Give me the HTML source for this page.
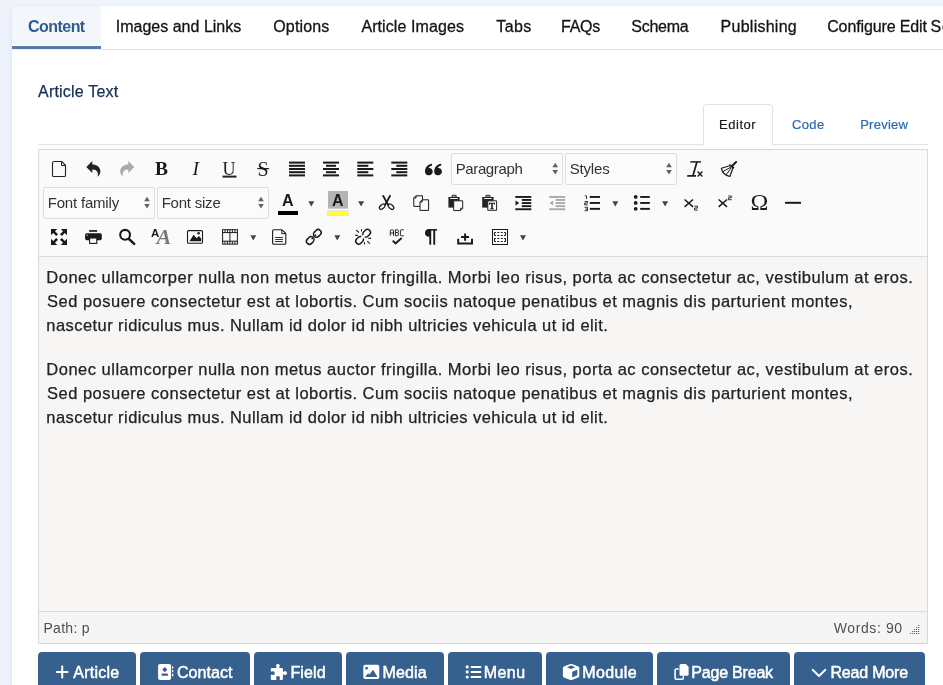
<!DOCTYPE html>
<html><head><meta charset="utf-8"><title>Article Edit</title>
<style>
html,body{margin:0;padding:0;}
body{width:943px;height:685px;overflow:hidden;position:relative;background:#eff3fc;font-family:"Liberation Sans",sans-serif;}
.abs{position:absolute;}
.t{position:absolute;white-space:pre;font-family:"Liberation Sans",sans-serif;}
#card{left:12px;top:6px;width:940px;height:690px;background:#fff;border-top-left-radius:4px;box-shadow:-1px 2px 5px rgba(175,195,230,0.28);}
#tabactive{left:12px;top:6px;width:89px;height:39px;background:#f3f6fa;border-top-left-radius:4px;}
#tabul{left:12px;top:46px;width:89px;height:3px;background:#587ca5;}
#tabline{left:101px;top:49px;width:842px;height:1px;background:#dde5f0;}
#tabline2{left:12px;top:49px;width:89px;height:1px;background:#e8edf5;}
#navline{left:38px;top:144px;width:890px;height:1px;background:#dfe3ed;}
#edtab{left:703px;top:104px;width:68px;height:40px;border:1px solid #dfe3ed;border-bottom:1px solid #fff;border-radius:4px 4px 0 0;background:#fff;}
#editor{left:38px;top:149px;width:888px;height:493px;border:1px solid #d8d8d8;background:#f7f6f5;}
#toolbar{left:39px;top:150px;width:888px;height:106px;background:#fafafa;border-bottom:1px solid #dcdcdc;}
#status{left:39px;top:611px;width:888px;height:32px;background:#f5f5f5;border-top:1px solid #d9d9d9;box-sizing:border-box;}
.sel{position:absolute;height:32px;box-sizing:border-box;border:1px solid #dedede;background:#fbfbfb;border-radius:2px;}
.txt{left:0;top:0;width:943px;height:685px;will-change:transform;}
.btn{position:absolute;top:652px;height:40px;background:#36608e;border-radius:4px;}
</style></head><body>
<div class="abs" id="card"></div>
<div class="abs" id="tabactive"></div>
<div class="abs" id="tabul"></div>
<div class="abs" id="tabline"></div>
<div class="abs" id="tabline2"></div>
<div class="abs" id="navline"></div>
<div class="abs" id="edtab"></div>
<div class="abs" id="editor"></div>
<div class="abs" id="toolbar"></div>
<div class="abs" id="status"></div>
<div class="sel" style="left:451px;top:153px;width:112px"></div>
<div class="sel" style="left:565px;top:153px;width:112px"></div>
<div class="sel" style="left:43px;top:187px;width:112px"></div>
<div class="sel" style="left:157px;top:187px;width:112px"></div>
<div class="btn" style="left:38px;width:98px"></div>
<div class="btn" style="left:140px;width:109.5px"></div>
<div class="btn" style="left:254px;width:88px"></div>
<div class="btn" style="left:346px;width:98px"></div>
<div class="btn" style="left:448px;width:94px"></div>
<div class="btn" style="left:546px;width:107px"></div>
<div class="btn" style="left:657px;width:133px"></div>
<div class="btn" style="left:794px;width:131px"></div>
<svg class="abs" style="left:0;top:0" width="943" height="685" viewBox="0 0 943 685">
<!-- ROW 1 -->
<!-- new document -->
<path d="M53.5 161.5 h8.2 l3.8 3.8 v9.9 a1.3 1.3 0 0 1 -1.3 1.3 h-10.4 a1.3 1.3 0 0 1 -1.3 -1.3 v-12.4 a1.3 1.3 0 0 1 1.3 -1.3 z" fill="none" stroke="#222" stroke-width="1.1"/>
<path d="M61.5 161.8 v3.7 h3.8" fill="none" stroke="#222" stroke-width="1"/>
<!-- undo -->
<path d="M86.3 167 L92.3 161.1 L92.3 164.5 C96.5 164.5 100.4 167.2 100.4 171.2 C100.4 173.6 99 175.6 97.6 176.7 C98.2 174.6 98.6 169.6 92.3 169.6 L92.3 172.9 Z" fill="#222"/>
<!-- redo (disabled) -->
<path d="M134.3 167 L128.3 161.1 L128.3 164.5 C124.1 164.5 120.2 167.2 120.2 171.2 C120.2 173.6 121.6 175.6 123 176.7 C122.4 174.6 122 169.6 128.3 169.6 L128.3 172.9 Z" fill="#aaa"/>
<!-- underline bar -->
<rect x="222.5" y="175.6" width="14" height="2" fill="#222"/>
<!-- strike line -->
<rect x="257.3" y="168" width="11.8" height="1.2" fill="#222"/>
<!-- justify -->
<g fill="#1a1a1a">
<rect x="289" y="161.6" width="16" height="2"/><rect x="289" y="164.8" width="16" height="2"/><rect x="289" y="168" width="16" height="2"/><rect x="289" y="171.2" width="16" height="2"/><rect x="289" y="174.4" width="16" height="2"/>
<!-- center -->
<rect x="323" y="161.6" width="16" height="2"/><rect x="326" y="164.8" width="10" height="2"/><rect x="323" y="168" width="16" height="2"/><rect x="326" y="171.2" width="10" height="2"/><rect x="323" y="174.4" width="16" height="2"/>
<!-- left -->
<rect x="357.3" y="161.6" width="16" height="2"/><rect x="357.3" y="164.8" width="11" height="2"/><rect x="357.3" y="168" width="16" height="2"/><rect x="357.3" y="171.2" width="11" height="2"/><rect x="357.3" y="174.4" width="16" height="2"/>
<!-- right -->
<rect x="391.3" y="161.6" width="16" height="2"/><rect x="396.3" y="164.8" width="11" height="2"/><rect x="391.3" y="168" width="16" height="2"/><rect x="396.3" y="171.2" width="11" height="2"/><rect x="391.3" y="174.4" width="16" height="2"/>
</g>
<!-- blockquote -->
<g fill="#1a1a1a">
<path d="M428.6 175.2 a3.6 3.6 0 0 1 -3.6 -3.6 c0 -4.4 3 -7.6 7 -7.9 v1.7 c-1.9 0.4 -3.2 1.7 -3.5 2.7 a3.6 3.6 0 1 1 0.1 7.1 z"/>
<path d="M437.8 175.2 a3.6 3.6 0 0 1 -3.6 -3.6 c0 -4.4 3 -7.6 7 -7.9 v1.7 c-1.9 0.4 -3.2 1.7 -3.5 2.7 a3.6 3.6 0 1 1 0.1 7.1 z"/>
</g>
<!-- select arrows -->
<g fill="#606060">
<path d="M552.4 167.2 l2.8 -4.4 l2.8 4.4 z M552.4 170 l2.8 4.6 l2.8 -4.6 z"/>
<path d="M666.2 167.2 l2.8 -4.4 l2.8 4.4 z M666.2 170 l2.8 4.6 l2.8 -4.6 z"/>
<path d="M144.2 201.2 l2.8 -4.4 l2.8 4.4 z M144.2 204 l2.8 4.6 l2.8 -4.6 z"/>
<path d="M258.2 201.2 l2.8 -4.4 l2.8 4.4 z M258.2 204 l2.8 4.6 l2.8 -4.6 z"/>
</g>
<!-- remove format Tx -->
<g stroke="#1a1a1a" fill="none">
<path d="M690.3 161.9 h10.6" stroke-width="1.5"/>
<path d="M696.9 162 L693 175.4" stroke-width="1.7"/>
<path d="M687.2 175.9 h8.8" stroke-width="1.7"/>
<path d="M697.6 171.6 l4.8 4.8 M702.4 171.6 l-4.8 4.8" stroke-width="1.4"/>
</g>
<!-- brush / clear -->
<g stroke="#1a1a1a" fill="none" stroke-linejoin="round" stroke-linecap="round">
<path d="M736.1 162 L732 166" stroke-width="1.9"/>
<path d="M730 165.1 L733.4 167.5" stroke-width="1.7"/>
<path d="M729.8 165.7 L721.4 168.3 Q722.6 174.6 729.9 176.5 L733 167.800" stroke-width="1.2"/>
<path d="M730.600 167.300 L723 171.500 M731.300 167.800 L726.300 174.500" stroke-width="1"/>
</g>
<!-- ROW 2 -->
<!-- text colour bar -->
<rect x="278" y="211" width="20" height="4" fill="#000"/>
<!-- bg colour -->
<rect x="328" y="191" width="20" height="17.6" fill="#b4b4b4"/>
<rect x="327.5" y="210.5" width="21" height="5" fill="#ffff33" stroke="#e4e4e4" stroke-width="1"/>
<!-- dropdown arrows row2 -->
<g fill="#444">
<path d="M308.3 201.2 h6 l-3 5.2 z"/>
<path d="M358.1 201.2 h6 l-3 5.2 z"/>
<path d="M612.3 201.2 h6 l-3 5.2 z"/>
<path d="M662.1 201.2 h6 l-3 5.2 z"/>
<!-- row3 -->
<path d="M250.3 235.2 h6 l-3 5.2 z"/>
<path d="M334.3 235.2 h6 l-3 5.2 z"/>
<path d="M520 235.2 h6 l-3 5.2 z"/>
</g>
<!-- cut (scissors) -->
<g stroke="#1a1a1a" fill="none">
<path d="M383.2 195.9 L387.8 204.4" stroke-width="1.9" stroke-linecap="round"/>
<path d="M390 195.9 L385.4 204.4" stroke-width="1.9" stroke-linecap="round"/>
<ellipse cx="382.2" cy="206.7" rx="3.3" ry="1.9" transform="rotate(-42 382.2 206.7)" stroke-width="1.3"/>
<ellipse cx="391" cy="206.7" rx="3.3" ry="1.9" transform="rotate(42 391 206.7)" stroke-width="1.3"/>
</g>
<!-- copy -->
<g stroke="#1a1a1a" fill="#fafafa" stroke-width="1">
<path d="M415.8 195.8 h6.7 v10.6 h-8.7 v-8.6 z"/>
<path d="M413.9 198 h2.1 v-2.1" fill="none"/>
<path d="M422.1 199.8 h6.5 v10.6 h-8.6 v-8.5 z"/>
<path d="M420.1 202 h2.1 v-2.1" fill="none"/>
</g>
<!-- paste -->
<g>
<path d="M448.4 197 h11.2 v10.6 h-11.2 z" fill="#222"/>
<path d="M452.2 195.3 h3.9 v1.8 h-3.9 z" fill="none" stroke="#222" stroke-width="1"/>
<rect x="450.2" y="198" width="7.600" height="1" fill="#f0f0f0"/>
<path d="M453.7 200.8 h9 v7.6 l-2.2 2.2 h-6.8 z" fill="#fafafa" stroke="#222" stroke-width="1"/>
<path d="M462.7 208.3 h-2.3 v2.3" fill="none" stroke="#222" stroke-width="0.9"/>
</g>
<!-- paste text -->
<g>
<path d="M482.2 197 h11.4 v10.6 h-11.4 z" fill="#222"/>
<path d="M486 195.3 h3.9 v1.8 h-3.9 z" fill="none" stroke="#222" stroke-width="1"/>
<rect x="484.1" y="198" width="7.600" height="1" fill="#f0f0f0"/>
<path d="M487.8 200.8 h8.800 v9.500 h-8.800 z" fill="#fafafa" stroke="#222" stroke-width="1"/>
</g>
<!-- indent -->
<g fill="#1a1a1a">
<rect x="515.3" y="196" width="16" height="1.9"/>
<rect x="521.8" y="199" width="9.5" height="1.9"/>
<rect x="521.8" y="202.1" width="9.5" height="1.9"/>
<rect x="521.8" y="205.2" width="9.5" height="1.9"/>
<rect x="515.3" y="208.3" width="16" height="1.9"/>
<path d="M515.5 200.5 l3.8 2.5 l-3.8 2.5 z"/>
</g>
<!-- outdent disabled -->
<g fill="#aaa">
<rect x="549.2" y="196" width="16" height="1.9"/>
<rect x="555.6" y="199" width="9.6" height="1.9"/>
<rect x="555.6" y="202.1" width="9.6" height="1.9"/>
<rect x="555.6" y="205.2" width="9.6" height="1.9"/>
<rect x="549.2" y="208.3" width="16" height="1.9"/>
<path d="M553.2 200.5 l-3.6 2.5 l3.6 2.5 z"/>
</g>
<!-- numlist -->
<g fill="#1a1a1a">
<rect x="589.8" y="196" width="10.2" height="1.9"/>
<rect x="589.8" y="202" width="10.2" height="1.9"/>
<rect x="589.8" y="207.9" width="10.2" height="1.9"/>
</g>
<g stroke="#1a1a1a" fill="none" stroke-width="0.9">
<path d="M584.8 195.9 h1.7 v3.2"/>
<path d="M584.6 201.5 h2.9 v1.6 h-2.9 v1.7 h3.1"/>
<path d="M584.6 207.3 h2.9 v3.4 h-3 M585.4 209 h2.1"/>
</g>
<!-- bullist -->
<g fill="#1a1a1a">
<circle cx="635.7" cy="196.9" r="1.9"/><circle cx="635.7" cy="202.9" r="1.9"/><circle cx="635.7" cy="208.8" r="1.9"/>
<rect x="640.2" y="196" width="9.6" height="1.9"/>
<rect x="640.2" y="202" width="9.6" height="1.9"/>
<rect x="640.2" y="207.9" width="9.6" height="1.9"/>
</g>
<!-- subscript -->
<g stroke="#1a1a1a" fill="none">
<path d="M684.6 199.5 l8.4 7.4 M693 199.5 l-8.4 7.4" stroke-width="1.5"/>
<path d="M694.4 206.2 h3 v1.9 h-2.9 v2 h3.3" stroke-width="0.9"/>
<!-- superscript -->
<path d="M718.6 199.5 l8.4 7.4 M727 199.5 l-8.4 7.4" stroke-width="1.5"/>
<path d="M728.3 196 h3 v1.8 h-2.9 v1.9 h3.3" stroke-width="0.9"/>
</g>
<!-- hr -->
<rect x="785" y="201.8" width="16" height="2" fill="#1a1a1a"/>
<!-- ROW 3 -->
<!-- fullscreen -->
<g fill="#1a1a1a">
<path d="M51 229 h6.2 l-2.2 2.2 l3 3 l-1.8 1.8 l-3 -3 l-2.2 2.2 z"/>
<path d="M67 229 v6.2 l-2.2 -2.2 l-3 3 l-1.8 -1.8 l3 -3 l-2.2 -2.2 z"/>
<path d="M51 245 v-6.2 l2.2 2.2 l3 -3 l1.8 1.8 l-3 3 l2.2 2.2 z"/>
<path d="M67 245 h-6.2 l2.2 -2.2 l-3 -3 l1.8 -1.8 l3 3 l2.2 -2.2 z"/>
</g>
<!-- print -->
<g>
<rect x="89.1" y="230.1" width="8" height="1.7" fill="#1a1a1a"/>
<rect x="85.1" y="233.2" width="16.7" height="7" rx="1.6" fill="#1a1a1a"/>
<rect x="89.6" y="238" width="7.2" height="5.4" fill="#fafafa" stroke="#1a1a1a" stroke-width="1.1"/>
<circle cx="87.2" cy="235.3" r="0.7" fill="#ccc"/>
</g>
<!-- search -->
<g stroke="#1a1a1a" fill="none">
<circle cx="125.100" cy="234.800" r="4.900" stroke-width="2.100"/>
<path d="M128.9 239 L134.2 243.9" stroke-width="2.5" stroke-linecap="round"/>
</g>
<!-- image -->
<g>
<rect x="187.5" y="230.6" width="15" height="12.6" rx="1" fill="#fafafa" stroke="#1a1a1a" stroke-width="1.1"/>
<path d="M189.5 241.3 L193.6 234.700 L196.600 238.300 L199 235.9 L201.2 238.600 V241.3 Z" fill="#1a1a1a"/>
<circle cx="198.6" cy="233.3" r="1.3" fill="#1a1a1a"/>
</g>
<!-- media -->
<g stroke="#1a1a1a" fill="none" stroke-width="1">
<rect x="222.6" y="229.7" width="14.8" height="14.4"/>
<path d="M222.6 232.6 h14.8 M222.6 241.2 h14.8 M229.9 232.6 v8.6" />
<path d="M225 229.7 v2.9 M227.5 229.7 v2.9 M229.9 229.7 v2.9 M232.4 229.7 v2.9 M234.9 229.7 v2.9 M225 241.2 v2.9 M227.5 241.2 v2.9 M229.9 241.2 v2.9 M232.4 241.2 v2.9 M234.9 241.2 v2.9" stroke-width="0.9"/>
</g>
<!-- template -->
<g stroke="#1a1a1a" fill="none">
<path d="M273.9 229.7 h8.1 l3.8 3.8 v9.5 a1.3 1.3 0 0 1 -1.3 1.3 h-10.6 a1.3 1.3 0 0 1 -1.3 -1.3 v-12 a1.3 1.3 0 0 1 1.3 -1.3 z" stroke-width="1.1"/>
<path d="M281.8 230 v3.7 h3.8" stroke-width="1"/>
<path d="M275.2 237.500 h7.700 M275.2 239.500 h7.700 M275.2 241.500 h7.700" stroke-width="0.900"/>
</g>
<!-- link -->
<g stroke="#1a1a1a" fill="none" stroke-width="1.450" stroke-linecap="round">
<path d="M3.92 -1.27 A3 3 0 0 0 1.2 -3 H-1.2 A3 3 0 0 0 -1.2 3 H1.2 A3 3 0 0 0 3.92 1.27" transform="translate(310.3 240.4) rotate(-45)"/>
<path d="M3.92 -1.27 A3 3 0 0 0 1.2 -3 H-1.2 A3 3 0 0 0 -1.2 3 H1.2 A3 3 0 0 0 3.92 1.27" transform="translate(317.3 233.4) rotate(135)"/>
<path d="M312 238.700 L315.700 235" stroke-width="1.300"/>
</g>
<!-- unlink -->
<g stroke="#1a1a1a" fill="none" stroke-width="1.450" stroke-linecap="round">
<path d="M3.6 -1.8 A3 3 0 0 0 1.2 -3 H-1.2 A3 3 0 0 0 -1.2 3 H1.2 A3 3 0 0 0 3.6 1.8" transform="translate(359.6 240.3) rotate(-45)"/>
<path d="M3.6 -1.8 A3 3 0 0 0 1.2 -3 H-1.2 A3 3 0 0 0 -1.2 3 H1.2 A3 3 0 0 0 3.6 1.8" transform="translate(366.6 233.3) rotate(135)"/>
<path d="M356.300 230.100 L358.900 232.500 M361.500 229.200 V231.500 M355.200 235.400 H357.800 M368.300 238.400 H371 M364.500 242.300 V244.600 M367.300 241.100 L369.900 243.600" stroke-width="1.100" stroke-linecap="butt"/>
</g>
<!-- spellcheck -->
<g stroke="#1a1a1a" fill="none">
<path d="M390.3 235.8 v-5 a1 1 0 0 1 1 -1 h1.2 a1 1 0 0 1 1 1 v5 M390.3 233 h3.2" stroke-width="0.95"/>
<path d="M395.4 229.8 v6 M395.4 229.8 h2 a1 1 0 0 1 1 1 v0.8 a1 1 0 0 1 -1 1 h-2 M397.4 232.6 a1 1 0 0 1 1 1 v1.2 a1 1 0 0 1 -1 1 h-2" stroke-width="0.95"/>
<path d="M403.8 229.8 h-2.4 a1 1 0 0 0 -1 1 v4 a1 1 0 0 0 1 1 h2.4" stroke-width="0.95"/>
<path d="M392.7 240.6 l2.9 2.8 l6 -5.4" stroke-width="2"/>
</g>
<!-- pilcrow -->
<g fill="#1a1a1a">
<path d="M430 229.100 h-0.800 a4.200 3.800 0 0 0 0 7.600 h0.800 z"/>
<rect x="428" y="229.100" width="9.100" height="1.500"/>
<rect x="429.300" y="229.100" width="1.900" height="15.600"/>
<rect x="433.300" y="229.100" width="1.900" height="15.600"/>
</g>
<!-- upload/insert -->
<g stroke="#1a1a1a" fill="none" stroke-width="2">
<path d="M458.2 238.8 v4.8 h13.8 v-4.8"/>
<path d="M465.1 233.4 v7.4 M461.1 237.1 h8"/>
</g>
<!-- table -->
<g stroke="#1a1a1a" fill="none">
<rect x="492.5" y="229.5" width="15" height="15" stroke-width="1"/>
<path d="M496 232.5 H494.5 V235.5 H496 M504 232.5 H505.5 V235.5 H504 M497.4 232.5 h1.9 M500.9 232.5 h1.9 M497.4 235.5 h1.9 M500.9 235.5 h1.9 M496 238.5 H494.5 V241.5 H496 M504 238.5 H505.5 V241.5 H504 M497.4 238.5 h1.9 M500.9 238.5 h1.9 M497.4 241.5 h1.9 M500.9 241.5 h1.9 " stroke-width="1"/>
</g>
<!-- status resize handle -->
<g fill="#666"><rect x="918" y="625" width="1.2" height="1" /><rect x="918" y="627" width="1.2" height="1" /><rect x="916" y="627" width="1.2" height="1" /><rect x="918" y="629" width="1.2" height="1" /><rect x="916" y="629" width="1.2" height="1" /><rect x="914" y="629" width="1.2" height="1" /><rect x="918" y="631" width="1.2" height="1" /><rect x="916" y="631" width="1.2" height="1" /><rect x="914" y="631" width="1.2" height="1" /><rect x="912" y="631" width="1.2" height="1" /><rect x="918" y="633" width="1.2" height="1" /><rect x="916" y="633" width="1.2" height="1" /><rect x="914" y="633" width="1.2" height="1" /><rect x="912" y="633" width="1.2" height="1" /><rect x="910" y="633" width="1.2" height="1" /></g>
<!-- BUTTON ICONS -->
<g fill="#fff">
<!-- plus -->
<rect x="55.9" y="671" width="12.6" height="2" rx="0.8"/>
<rect x="61.2" y="665.5" width="2" height="13" rx="0.8"/>
<!-- address book -->
<path d="M160.1 664 h9 a2 2 0 0 1 2 2 v12 a2 2 0 0 1 -2 2 h-9 a2 2 0 0 1 -2 -2 v-12 a2 2 0 0 1 2 -2 z M164.8 667.6 a2.1 2.1 0 1 0 0.01 0 z M162.9 673.4 a1.4 1.4 0 0 0 -1.4 1.4 v0.9 h6.6 v-0.9 a1.4 1.4 0 0 0 -1.4 -1.4 z" fill-rule="evenodd"/>
<rect x="172" y="666.3" width="1.3" height="2.4" rx="0.5"/>
<rect x="172" y="669.9" width="1.3" height="2.4" rx="0.5"/>
<rect x="172" y="673.8" width="1.3" height="2.4" rx="0.5"/>
<!-- puzzle -->
<path d="M270.8 669 a1 1 0 0 1 1 -1 h4.7 v-0.9 a1.9 1.9 0 1 1 2.8 0 v0.9 h2.6 a1 1 0 0 1 1 1 v2.7 h0.9 a1.9 1.9 0 1 1 0 2.8 h-0.9 v4.5 a1 1 0 0 1 -1 1 h-2.2 v-1.3 a1.9 1.9 0 1 0 -3.4 0 v1.3 h-4.5 a1 1 0 0 1 -1 -1 v-4.3 h1.2 a1.9 1.9 0 1 0 0 -3.3 h-1.2 z"/>
<!-- image -->
<path d="M365.3 664.7 h12 a2 2 0 0 1 2 2 v10.3 a2 2 0 0 1 -2 2 h-12 a2 2 0 0 1 -2 -2 v-10.3 a2 2 0 0 1 2 -2 z M366.6 666.8 a1.4 1.4 0 1 0 0.01 0 z M365.2 676.9 h11.8 v-1 l-3.9 -6.1 l-3.7 4.8 l-1.4 -1.4 z" fill-rule="evenodd"/>
<!-- list -->
<circle cx="467.2" cy="666.9" r="1.6"/><circle cx="467.2" cy="671.9" r="1.6"/><circle cx="467.2" cy="677" r="1.6"/>
<rect x="470.7" y="665.9" width="10.6" height="2" rx="0.6"/>
<rect x="470.7" y="670.9" width="10.6" height="2" rx="0.6"/>
<rect x="470.7" y="676" width="10.6" height="2" rx="0.6"/>
<!-- cube -->
<path d="M570.3 664.1 a2 2 0 0 1 1.6 0 l6.4 2.5 a1.6 1.6 0 0 1 1 1.5 v7.8 a1.6 1.6 0 0 1 -1 1.5 l-6.4 2.5 a2 2 0 0 1 -1.6 0 l-6.4 -2.5 a1.6 1.6 0 0 1 -1 -1.5 v-7.8 a1.6 1.6 0 0 1 1 -1.5 z M571.1 665.6 l-4.2 1.6 l4.2 1.7 l4.3 -1.7 z M572.2 671.7 v5.7 l5.1 -2.1 v-5.6 z" fill-rule="evenodd"/>
<!-- copy -->
<path d="M681 664 h4.8 l2.8 2.8 v7.5 a1.5 1.5 0 0 1 -1.5 1.5 h-6.1 a1.5 1.5 0 0 1 -1.5 -1.5 v-8.8 a1.5 1.5 0 0 1 1.5 -1.5 z"/>
</g>
<path d="M678.2 669 h-2 a1.1 1.1 0 0 0 -1.1 1.100 v8 a1.1 1.1 0 0 0 1.1 1.1 h6 a1.1 1.1 0 0 0 1.1 -1.1 v-1.200" fill="none" stroke="#fff" stroke-width="1.6" stroke-linecap="round"/>
<!-- chevron -->
<path d="M812.6 669.8 L819 676 L825.4 669.8" fill="none" stroke="#fff" stroke-width="1.9" stroke-linecap="round" stroke-linejoin="round"/>
</svg>
<div class="abs txt"><span class="t g" style="left:155px;top:157px;font-family:'Liberation Serif',serif;font-weight:700;font-size:19.5px;line-height:24px;color:#1a1a1a">B</span>
<span class="t g" style="left:192.4px;top:157px;font-family:'Liberation Serif',serif;font-style:italic;font-size:19.5px;line-height:24px;color:#1a1a1a">I</span>
<span class="t g" style="left:222.6px;top:158px;font-family:'Liberation Serif',serif;font-size:18px;line-height:22px;color:#1a1a1a">U</span>
<span class="t g" style="left:257.6px;top:156.500px;font-family:'Liberation Serif',serif;font-size:20px;line-height:24px;color:#1a1a1a">S</span>
<span class="t g" style="left:282px;top:190.500px;font-weight:700;font-size:16px;line-height:20px;color:#1a1a1a">A</span>
<span class="t g" style="left:332px;top:190.500px;font-weight:700;font-size:16px;line-height:20px;color:#1a1a1a">A</span>
<span class="t g" style="left:750.5px;top:189px;font-family:'Liberation Serif',serif;font-size:24px;line-height:26px;color:#1a1a1a">&Omega;</span>
<span class="t g" style="left:151px;top:225px;font-weight:700;font-size:11.5px;line-height:16px;color:#1a1a1a">A</span>
<span class="t g" style="left:156.500px;top:223.500px;font-family:'Liberation Serif',serif;font-weight:700;font-style:italic;font-size:22px;line-height:26px;color:#7a7a7a">A</span>
<span class="t g" style="left:488.900px;top:199.500px;font-family:'Liberation Serif',serif;font-weight:700;font-size:9px;line-height:12px;color:#1a1a1a;-webkit-text-stroke:0.3px #1a1a1a">T</span>
</div>
<div class="abs txt"><span class="t" id="t0" style="left:28.00px;top:17.00px;font-size:16px;line-height:20px;font-weight:700;color:#2d5d8f;letter-spacing:-0.540px;">Content</span>
<span class="t" id="t1" style="left:115.70px;top:17.00px;font-size:16px;line-height:20px;font-weight:400;color:#151515;letter-spacing:0.013px;-webkit-text-stroke:0.3px #151515;">Images and Links</span>
<span class="t" id="t2" style="left:273.30px;top:17.00px;font-size:16px;line-height:20px;font-weight:400;color:#151515;letter-spacing:0.127px;-webkit-text-stroke:0.3px #151515;">Options</span>
<span class="t" id="t3" style="left:361.40px;top:17.00px;font-size:16px;line-height:20px;font-weight:400;color:#151515;letter-spacing:0.094px;-webkit-text-stroke:0.3px #151515;">Article Images</span>
<span class="t" id="t4" style="left:496.30px;top:17.00px;font-size:16px;line-height:20px;font-weight:400;color:#151515;letter-spacing:0.401px;-webkit-text-stroke:0.3px #151515;">Tabs</span>
<span class="t" id="t5" style="left:561.10px;top:17.00px;font-size:16px;line-height:20px;font-weight:400;color:#151515;letter-spacing:-0.272px;-webkit-text-stroke:0.3px #151515;">FAQs</span>
<span class="t" id="t6" style="left:631.30px;top:17.00px;font-size:16px;line-height:20px;font-weight:400;color:#151515;letter-spacing:-0.281px;-webkit-text-stroke:0.3px #151515;">Schema</span>
<span class="t" id="t7" style="left:720.60px;top:17.00px;font-size:16px;line-height:20px;font-weight:400;color:#151515;letter-spacing:0.252px;-webkit-text-stroke:0.3px #151515;">Publishing</span>
<span class="t" id="t8" style="left:827.20px;top:17.00px;font-size:16px;line-height:20px;font-weight:400;color:#151515;letter-spacing:-0.122px;-webkit-text-stroke:0.3px #151515;">Configure Edit</span>
<span class="t" id="t9" style="left:930.40px;top:17.00px;font-size:16px;line-height:20px;font-weight:400;color:#151515;letter-spacing:0.939px;-webkit-text-stroke:0.3px #151515;">Screen</span>
<span class="t" id="t10" style="left:38.10px;top:82.00px;font-size:16px;line-height:20px;font-weight:400;color:#132f53;letter-spacing:0.195px;-webkit-text-stroke:0.25px #132f53;">Article Text</span>
<span class="t" id="t11" style="left:719.09px;top:117.00px;font-size:13px;line-height:16px;font-weight:400;color:#1c1c1c;letter-spacing:0.519px;-webkit-text-stroke:0.2px #1c1c1c;">Editor</span>
<span class="t" id="t12" style="left:791.89px;top:117.00px;font-size:13px;line-height:16px;font-weight:400;color:#2a69b8;letter-spacing:0.428px;-webkit-text-stroke:0.2px #2a69b8;">Code</span>
<span class="t" id="t13" style="left:860.19px;top:117.00px;font-size:13px;line-height:16px;font-weight:400;color:#2a69b8;letter-spacing:0.252px;-webkit-text-stroke:0.2px #2a69b8;">Preview</span>
<span class="t" id="t14" style="left:46.37px;top:267.00px;font-size:16.5px;line-height:21px;font-weight:400;color:#222;letter-spacing:0.489px;-webkit-text-stroke:0.25px #222;">Donec ullamcorper nulla non metus auctor fringilla. Morbi leo risus, porta ac consectetur ac, vestibulum at eros.</span>
<span class="t" id="t15" style="left:46.97px;top:291.00px;font-size:16.5px;line-height:21px;font-weight:400;color:#222;letter-spacing:0.494px;-webkit-text-stroke:0.25px #222;">Sed posuere consectetur est at lobortis. Cum sociis natoque penatibus et magnis dis parturient montes,</span>
<span class="t" id="t16" style="left:46.37px;top:315.00px;font-size:16.5px;line-height:21px;font-weight:400;color:#222;letter-spacing:0.431px;-webkit-text-stroke:0.25px #222;">nascetur ridiculus mus. Nullam id dolor id nibh ultricies vehicula ut id elit.</span>
<span class="t" id="t17" style="left:46.37px;top:359.00px;font-size:16.5px;line-height:21px;font-weight:400;color:#222;letter-spacing:0.489px;-webkit-text-stroke:0.25px #222;">Donec ullamcorper nulla non metus auctor fringilla. Morbi leo risus, porta ac consectetur ac, vestibulum at eros.</span>
<span class="t" id="t18" style="left:46.97px;top:383.00px;font-size:16.5px;line-height:21px;font-weight:400;color:#222;letter-spacing:0.494px;-webkit-text-stroke:0.25px #222;">Sed posuere consectetur est at lobortis. Cum sociis natoque penatibus et magnis dis parturient montes,</span>
<span class="t" id="t19" style="left:46.37px;top:407.00px;font-size:16.5px;line-height:21px;font-weight:400;color:#222;letter-spacing:0.431px;-webkit-text-stroke:0.25px #222;">nascetur ridiculus mus. Nullam id dolor id nibh ultricies vehicula ut id elit.</span>
<span class="t" id="t20" style="left:43.42px;top:619.00px;font-size:14px;line-height:18px;font-weight:400;color:#505050;letter-spacing:0.318px;">Path:</span>
<span class="t" id="t21" style="left:81.83px;top:619.00px;font-size:14px;line-height:18px;font-weight:400;color:#505050;letter-spacing:3.800px;">p</span>
<span class="t" id="t22" style="left:833.73px;top:619.00px;font-size:14px;line-height:18px;font-weight:400;color:#505050;letter-spacing:0.604px;">Words: 90</span>
<span class="t" id="t23" style="left:455.66px;top:159.00px;font-size:15px;line-height:19px;font-weight:400;color:#333;letter-spacing:-0.372px;">Paragraph</span>
<span class="t" id="t24" style="left:569.66px;top:159.00px;font-size:15px;line-height:19px;font-weight:400;color:#333;letter-spacing:-0.154px;">Styles</span>
<span class="t" id="t25" style="left:47.66px;top:193.00px;font-size:15px;line-height:19px;font-weight:400;color:#333;letter-spacing:-0.187px;">Font family</span>
<span class="t" id="t26" style="left:161.66px;top:193.00px;font-size:15px;line-height:19px;font-weight:400;color:#333;letter-spacing:-0.221px;">Font size</span>
<span class="t" id="t27" style="left:73.30px;top:663.00px;font-size:16px;line-height:20px;font-weight:400;color:#fff;letter-spacing:0.224px;-webkit-text-stroke:0.5px #fff;">Article</span>
<span class="t" id="t28" style="left:177.00px;top:663.00px;font-size:16px;line-height:20px;font-weight:400;color:#fff;letter-spacing:0.043px;-webkit-text-stroke:0.5px #fff;">Contact</span>
<span class="t" id="t29" style="left:290.40px;top:663.00px;font-size:16px;line-height:20px;font-weight:400;color:#fff;letter-spacing:0.128px;-webkit-text-stroke:0.5px #fff;">Field</span>
<span class="t" id="t30" style="left:382.60px;top:663.00px;font-size:16px;line-height:20px;font-weight:400;color:#fff;letter-spacing:0.130px;-webkit-text-stroke:0.5px #fff;">Media</span>
<span class="t" id="t31" style="left:483.70px;top:663.00px;font-size:16px;line-height:20px;font-weight:400;color:#fff;letter-spacing:0.456px;-webkit-text-stroke:0.5px #fff;">Menu</span>
<span class="t" id="t32" style="left:582.30px;top:663.00px;font-size:16px;line-height:20px;font-weight:400;color:#fff;letter-spacing:0.383px;-webkit-text-stroke:0.5px #fff;">Module</span>
<span class="t" id="t33" style="left:691.30px;top:663.00px;font-size:16px;line-height:20px;font-weight:400;color:#fff;letter-spacing:-0.201px;-webkit-text-stroke:0.5px #fff;">Page Break</span>
<span class="t" id="t34" style="left:830.40px;top:663.00px;font-size:16px;line-height:20px;font-weight:400;color:#fff;letter-spacing:-0.182px;-webkit-text-stroke:0.5px #fff;">Read More</span></div>
</body></html>
